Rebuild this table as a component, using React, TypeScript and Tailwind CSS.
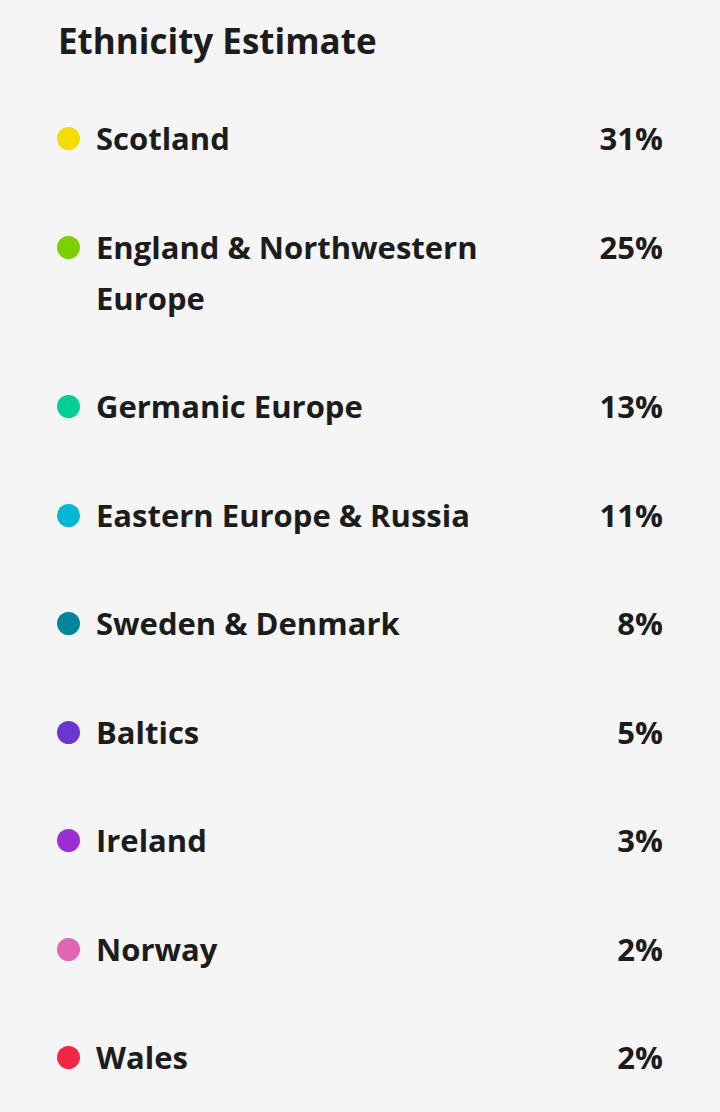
import React from 'react';

const rows = [
  { name: 'Scotland', pct: '31%', color: '#f2df00' },
  { name: 'England & Northwestern Europe', pct: '25%', color: '#7bd100' },
  { name: 'Germanic Europe', pct: '13%', color: '#00cf96' },
  { name: 'Eastern Europe & Russia', pct: '11%', color: '#00b8d1' },
  { name: 'Sweden & Denmark', pct: '8%', color: '#00869c' },
  { name: 'Baltics', pct: '5%', color: '#6b35d1' },
  { name: 'Ireland', pct: '3%', color: '#9b2fd1' },
  { name: 'Norway', pct: '2%', color: '#e066b3' },
  { name: 'Wales', pct: '2%', color: '#f02846' },
];

export default function App() {
  return (
    <div className="min-h-screen bg-[#f5f5f5] text-[#1c1c1c] font-['Open_Sans','Noto_Sans',sans-serif] pl-[57px] pr-[57px]">
      <h1 className="pt-[17px] pl-[1px] text-[35px] leading-[48px] font-bold">Ethnicity Estimate</h1>
      <div className="mt-[48px] flex flex-col gap-[57.5px]">
        {rows.map((r) => (
          <div key={r.name} className="flex items-start text-[31px] leading-[51px] font-bold">
            <div className="h-[51px] w-[39px] shrink-0 flex items-center">
              <span className="block w-[23px] h-[23px] rounded-full" style={{ backgroundColor: r.color }} />
            </div>
            <div className="max-w-[410px]">{r.name}</div>
            <div className="ml-auto">{r.pct}</div>
          </div>
        ))}
      </div>
    </div>
  );
}
